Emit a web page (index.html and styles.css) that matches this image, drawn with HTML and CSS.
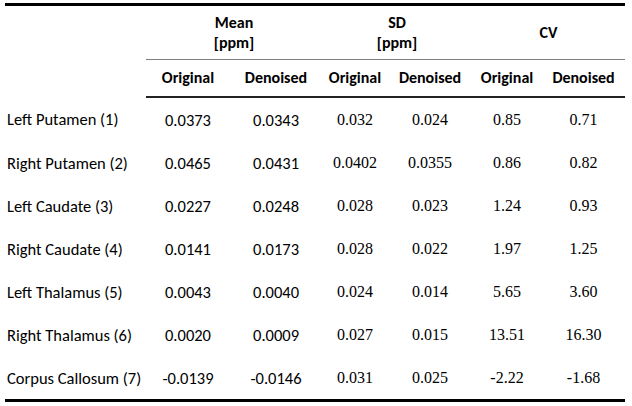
FILE: index.html
```html
<!DOCTYPE html>
<html>
<head>
<meta charset="utf-8">
<link rel="stylesheet" href="styles.css">
</head>
<body>
<table class="stats">
  <colgroup>
    <col class="c-label">
    <col class="c-m1"><col class="c-m2">
    <col class="c-s1"><col class="c-s2">
    <col class="c-v1"><col class="c-v2">
  </colgroup>
  <thead>
    <tr class="grp">
      <th class="blank"></th>
      <th colspan="2">Mean<br>[ppm]</th>
      <th colspan="2">SD<br>[ppm]</th>
      <th colspan="2">CV</th>
    </tr>
    <tr class="sub">
      <th class="blank"></th>
      <th>Original</th><th>Denoised</th>
      <th>Original</th><th>Denoised</th>
      <th>Original</th><th>Denoised</th>
    </tr>
  </thead>
  <tbody>
    <tr><td class="lbl">Left Putamen (1)</td><td>0.0373</td><td>0.0343</td><td class="tn">0.032</td><td class="tn">0.024</td><td class="tn">0.85</td><td class="tn">0.71</td></tr>
    <tr><td class="lbl">Right Putamen (2)</td><td>0.0465</td><td>0.0431</td><td class="tn">0.0402</td><td class="tn">0.0355</td><td class="tn">0.86</td><td class="tn">0.82</td></tr>
    <tr><td class="lbl">Left Caudate (3)</td><td>0.0227</td><td>0.0248</td><td class="tn">0.028</td><td class="tn">0.023</td><td class="tn">1.24</td><td class="tn">0.93</td></tr>
    <tr><td class="lbl">Right Caudate (4)</td><td>0.0141</td><td>0.0173</td><td class="tn">0.028</td><td class="tn">0.022</td><td class="tn">1.97</td><td class="tn">1.25</td></tr>
    <tr><td class="lbl">Left Thalamus (5)</td><td>0.0043</td><td>0.0040</td><td class="tn">0.024</td><td class="tn">0.014</td><td class="tn">5.65</td><td class="tn">3.60</td></tr>
    <tr><td class="lbl">Right Thalamus (6)</td><td>0.0020</td><td>0.0009</td><td class="tn">0.027</td><td class="tn">0.015</td><td class="tn">13.51</td><td class="tn">16.30</td></tr>
    <tr><td class="lbl">Corpus Callosum (7)</td><td>-0.0139</td><td>-0.0146</td><td class="tn">0.031</td><td class="tn">0.025</td><td class="tn">-2.22</td><td class="tn">-1.68</td></tr>
  </tbody>
</table>
</body>
</html>
```
FILE: styles.css
```css
html, body {
  margin: 0;
  padding: 0;
  background: #fff;
}
body {
  padding: 3px 0 0 5px;
  font-family: "Carlito", "Lato", "Liberation Sans", sans-serif;
  color: #000;
}
.stats {
  border-collapse: collapse;
  table-layout: fixed;
  width: 620px;
  border-top: 3px solid #000;
  border-bottom: 3px solid #000;
}
.c-label { width: 141px; }
.c-m1 { width: 84px; }
.c-m2 { width: 92px; }
.c-s1 { width: 66px; }
.c-s2 { width: 84px; }
.c-v1 { width: 70px; }
.c-v2 { width: 83px; }

.stats th, .stats td {
  padding: 0;
  text-align: center;
  vertical-align: middle;
}
.stats th {
  font-weight: bold;
  font-size: 16px;
  line-height: 20px;
}
.grp th {
  height: 53px;
  border-bottom: 1px solid #7f7f7f;
}
.grp th.blank, .sub th.blank {
  border-bottom: none;
}
.sub th {
  height: 36px;
  border-bottom: 2px solid #222;
}
.stats td {
  height: 43px;
  font-size: 16.5px;
  line-height: 20px;
}
.stats td.lbl {
  text-align: left;
  padding-left: 2px;
  font-size: 16.5px;
}
.stats td.tn {
  font-family: "Liberation Serif", "Times New Roman", serif;
  font-size: 16px;
}
```
